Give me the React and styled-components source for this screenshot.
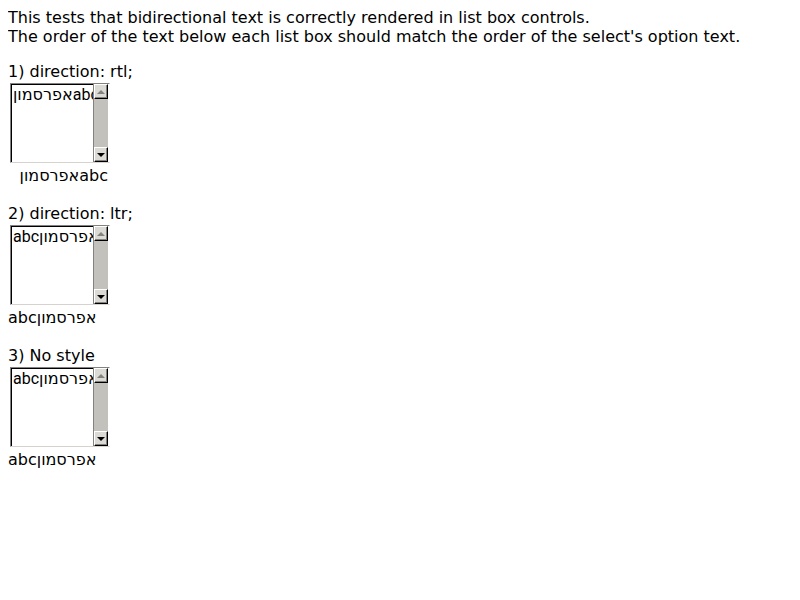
import React from "react";
import styled, { createGlobalStyle } from "styled-components";

const GlobalStyle = createGlobalStyle`
  body {
    margin: 8px;
    background: #fff;
    color: #000;
    font: 16px/19px "DejaVu Sans", sans-serif;
  }
`;

const Intro = styled.p`
  margin: 0 0 16px;
`;

const Section = styled.section`
  margin-bottom: 19px;
`;

const Label = styled.label`
  display: block;
`;

const ListBox = styled.div`
  display: flex;
  box-sizing: border-box;
  width: 100px;
  height: 80px;
  margin: 2px 2px 3px;
  border: 1px solid;
  border-color: #848280 #fff #d6d3ce #848280;
`;

const List = styled.select`
  appearance: none;
  flex: 1;
  min-width: 0;
  margin: 0;
  padding: 0 0 0 1px;
  border: solid #000;
  border-width: 1px 0 0 1px;
  border-radius: 0;
  outline: none;
  overflow: hidden;
  background: #fff;
  color: #000;
  font: 16px Roboto, "DejaVu Sans", sans-serif;
`;

const Choice = styled.option`
  width: max-content;
  min-height: 0;
  padding: 0;
  line-height: 16px;
  direction: ${(p) => p.dir};
`;

const ScrollBar = styled.div`
  display: flex;
  flex-direction: column;
  justify-content: space-between;
  box-sizing: border-box;
  width: 15px;
  margin-right: 1px;
  border: solid #848280;
  border-width: 0 0 0 1px;
  background: #c3c1bc;
`;

const Arrow = styled.button`
  display: flex;
  align-items: center;
  justify-content: center;
  box-sizing: border-box;
  width: 14px;
  height: 15px;
  padding: 0;
  border: 1px solid;
  border-color: #fff #000 #000 #fff;
  border-radius: 0;
  background: #dcdad5;
  box-shadow: inset -1px -1px #848280;
  color: ${(p) => (p.disabled ? "#848280" : "#000")};
`;

const Result = styled.div`
  width: 100px;
  direction: ${(p) => p.dir};
`;

const TEXT = "abcאפרסמון";

const CASES = [
  { id: "rtl", title: "1) direction: rtl;", dir: "rtl" },
  { id: "ltr", title: "2) direction: ltr;", dir: "ltr" },
  { id: "plain", title: "3) No style", dir: "ltr" },
];

function Triangle({ up }) {
  return (
    <svg width="8" height="4" viewBox="0 0 8 4" aria-hidden="true">
      <path d={up ? "M0 4L4 0L8 4Z" : "M0 0L4 4L8 0Z"} fill="currentColor" />
    </svg>
  );
}

export default function App() {
  return (
    <main>
      <GlobalStyle />
      <Intro>
        This tests that bidirectional text is correctly rendered in list box controls.
        <br />
        The order of the text below each list box should match the order of the select's option text.
      </Intro>
      {CASES.map(({ id, title, dir }) => (
        <Section key={id}>
          <Label htmlFor={id}>{title}</Label>
          <ListBox>
            <List id={id} size={4}>
              <Choice dir={dir}>{TEXT}</Choice>
            </List>
            <ScrollBar>
              <Arrow type="button" aria-label="Scroll up" disabled>
                <Triangle up />
              </Arrow>
              <Arrow type="button" aria-label="Scroll down">
                <Triangle />
              </Arrow>
            </ScrollBar>
          </ListBox>
          <Result dir={dir}>{TEXT}</Result>
        </Section>
      ))}
    </main>
  );
}
